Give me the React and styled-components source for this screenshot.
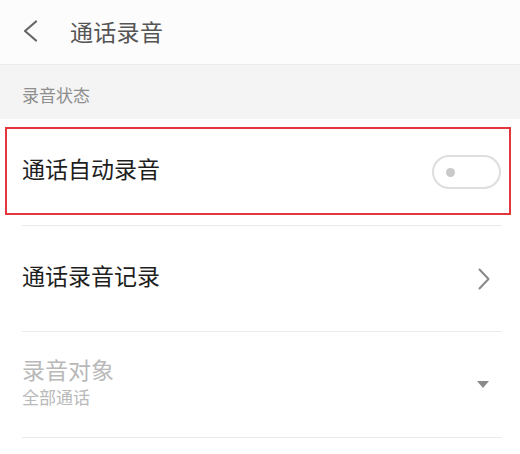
import React from 'react'
import styled, { createGlobalStyle } from 'styled-components'

const GlobalStyle = createGlobalStyle`
  html, body {
    margin: 0;
    padding: 0;
    background: #ffffff;
  }
  body {
    font-family: 'Noto Sans CJK SC', 'Noto Sans', sans-serif;
    -webkit-font-smoothing: antialiased;
  }
`

export default function App() {
  return (
    <Page>
      <GlobalStyle />
      <Header>
        <BackIcon viewBox="0 0 16 22">
          <path d="M14 1.5 L3 11 L14 20.5" />
        </BackIcon>
        <Title>通话录音</Title>
      </Header>

      <SectionLabel>录音状态</SectionLabel>

      <List>
        <Row>
          <Highlight />
          <RowText>
            <Label>通话自动录音</Label>
          </RowText>
          <Toggle>
            <Knob />
          </Toggle>
        </Row>

        <Row>
          <RowText>
            <Label>通话录音记录</Label>
          </RowText>
          <Chevron viewBox="0 0 12 22">
            <path d="M1.5 1.5 L10.5 11 L1.5 20.5" />
          </Chevron>
        </Row>

        <Row>
          <RowText>
            <Label disabled>录音对象</Label>
            <SubLabel>全部通话</SubLabel>
          </RowText>
          <Caret viewBox="0 0 12 8">
            <path d="M0 0 H12 L6 7 Z" />
          </Caret>
        </Row>
      </List>
    </Page>
  )
}

const Page = styled.div`
  width: 520px;
  height: 454px;
  overflow: hidden;
  background: #fff;
`

const Header = styled.div`
  height: 64px;
  display: flex;
  align-items: center;
  padding-left: 22px;
  background: #fcfcfc;
  border-bottom: 1px solid #ececec;
`

const BackIcon = styled.svg`
  width: 16px;
  height: 22px;
  margin-top: -2px;
  fill: none;
  stroke: #666;
  stroke-width: 2.2;
  stroke-linecap: round;
  stroke-linejoin: round;
`

const Title = styled.div`
  margin-left: 32px;
  margin-top: -3px;
  font-size: 23px;
  color: #555;
  letter-spacing: 0.3px;
`

const SectionLabel = styled.div`
  box-sizing: border-box;
  height: 54px;
  display: flex;
  align-items: center;
  padding: 4px 0 0 22px;
  background: #f4f4f4;
  font-size: 17px;
  color: #8e8e8e;
`

const List = styled.div`
  display: flex;
  flex-direction: column;
`

const Row = styled.div`
  position: relative;
  height: 105px;
  margin: 0 18px 0 22px;
  display: flex;
  align-items: center;
  justify-content: space-between;
  border-bottom: 1px solid #ebebeb;
  &:first-child {
    height: 106px;
  }
`

const Highlight = styled.div`
  position: absolute;
  top: 8px;
  left: -17px;
  right: -9px;
  bottom: 10px;
  border: 2px solid #e2363d;
  pointer-events: none;
`

const RowText = styled.div`
  display: flex;
  flex-direction: column;
  margin-bottom: 8px;
`

const Label = styled.div`
  font-size: 23px;
  line-height: 32px;
  color: ${({ disabled }) => (disabled ? '#b9b9b9' : '#1e1e1e')};
`

const SubLabel = styled.div`
  font-size: 17px;
  line-height: 24px;
  color: #b9b9b9;
`

const Toggle = styled.div`
  box-sizing: border-box;
  width: 69px;
  height: 34px;
  margin-right: 1px;
  border: 2px solid #dedede;
  border-radius: 17px;
  background: #fff;
  display: flex;
  align-items: center;
  padding-left: 12px;
`

const Knob = styled.div`
  width: 9px;
  height: 9px;
  border-radius: 50%;
  background: #c9c9c9;
`

const Chevron = styled.svg`
  width: 12px;
  height: 22px;
  margin-right: 12px;
  fill: none;
  stroke: #888;
  stroke-width: 2;
  stroke-linecap: round;
  stroke-linejoin: round;
`

const Caret = styled.svg`
  width: 12px;
  height: 8px;
  margin-right: 13px;
  fill: #8a8a8a;
`
